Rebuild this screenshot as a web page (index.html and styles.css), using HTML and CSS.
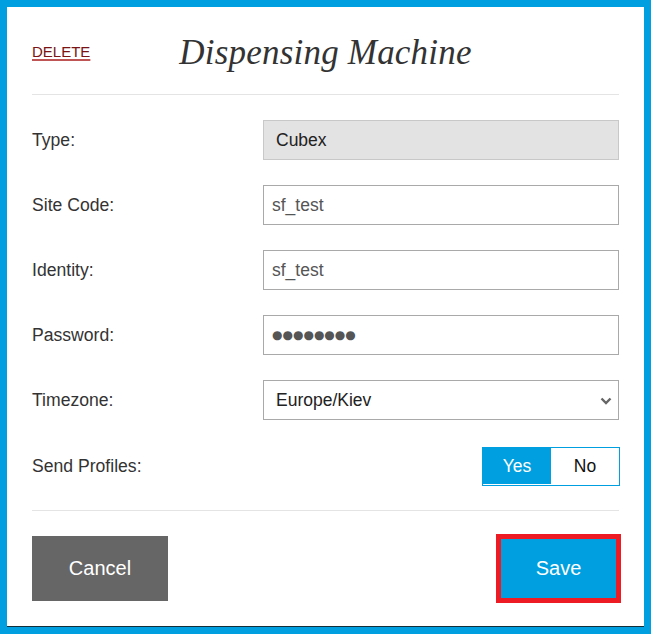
FILE: index.html
```html
<!DOCTYPE html>
<html>
<head>
<meta charset="utf-8">
<link rel="stylesheet" href="styles.css">
</head>
<body>
<div class="panel">
  <div class="header">
    <a class="delete" href="#">DELETE</a>
    <h1 class="title">Dispensing Machine</h1>
    <span></span>
  </div>
  <div class="rows">
    <div class="row">
      <label class="label">Type:</label>
      <div class="field readonly">Cubex</div>
    </div>
    <div class="row">
      <label class="label">Site Code:</label>
      <input class="field input" type="text" value="sf_test">
    </div>
    <div class="row">
      <label class="label">Identity:</label>
      <input class="field input" type="text" value="sf_test">
    </div>
    <div class="row">
      <label class="label">Password:</label>
      <input class="field input pwd" type="text" value="●●●●●●●●">
    </div>
    <div class="row">
      <label class="label">Timezone:</label>
      <div class="select-wrap">
        <select class="field select">
          <option>Europe/Kiev</option>
        </select>
        <svg class="chev" width="12" height="8" viewBox="0 0 12 8"><path d="M1.5 1.5 L6 6 L10.5 1.5" fill="none" stroke="#666" stroke-width="2.4"/></svg>
      </div>
    </div>
    <div class="row">
      <label class="label">Send Profiles:</label>
      <div class="toggle-cell">
        <div class="toggle">
          <span class="opt on">Yes</span>
          <span class="opt">No</span>
        </div>
      </div>
    </div>
  </div>
  <div class="footer">
    <button class="btn cancel">Cancel</button>
    <button class="btn save">Save</button>
  </div>
</div>
</body>
</html>
```
FILE: styles.css
```css
html, body {
  margin: 0;
  padding: 0;
  background: #00a0e0;
  height: 100%;
}
body {
  padding: 7px 7px 0 7px;
  box-sizing: border-box;
  font-family: "Liberation Sans", Arial, sans-serif;
}
.panel {
  background: #fff;
  padding: 0 25px 23px 25px;
  box-shadow: 0 1px 0 #12303c;
}
.header {
  display: grid;
  grid-template-columns: 1fr auto 1fr;
  align-items: center;
  box-sizing: border-box;
  height: 88px;
  padding-top: 4px;
  border-bottom: 1px solid #e4e4e4;
}
.delete {
  font-size: 15px;
  color: #7a1414;
  text-decoration: underline;
  text-decoration-color: #c05555;
  text-underline-offset: 2px;
  text-decoration-thickness: 2px;
  justify-self: start;
  margin-top: -2px;
}
.title {
  margin: 0;
  font-family: "Liberation Serif", Georgia, serif;
  font-style: italic;
  font-weight: normal;
  font-size: 35px;
  color: #333;
  letter-spacing: 0.2px;
}
.rows {
  display: flex;
  flex-direction: column;
  gap: 25px;
  padding: 25px 0;
  border-bottom: 1px solid #e4e4e4;
}
.row {
  display: grid;
  grid-template-columns: 231px 1fr;
  align-items: center;
  height: 40px;
}
.label {
  font-size: 17.6px;
  color: #333;
  margin-top: 1px;
}
.field {
  box-sizing: border-box;
  height: 40px;
  width: 356px;
  border: 1px solid #a9a9a9;
  font-family: "Liberation Sans", Arial, sans-serif;
  font-size: 17.5px;
  margin: 0;
  background: #fff;
}
.readonly {
  background: #e3e3e3;
  border-color: #c8c8c8;
  color: #222;
  display: flex;
  align-items: center;
  padding-left: 12px;
}
.input {
  padding: 0 8px;
  color: #555;
  outline: none;
}
.pwd {
  font-family: "DejaVu Sans", sans-serif;
  font-size: 12px;
  letter-spacing: 0;
  color: #555;
}
.select-wrap {
  position: relative;
  width: 356px;
  height: 40px;
}
.select {
  appearance: none;
  -webkit-appearance: none;
  padding: 0 12px;
  color: #222;
  border-radius: 0;
}
.chev {
  position: absolute;
  right: 7px;
  top: 17px;
}
.toggle-cell {
  display: flex;
  justify-content: flex-end;
  align-self: start;
  margin-top: 2px;
  margin-right: -1px;
}
.toggle {
  display: flex;
  border: 1px solid #00a0e0;
  height: 39px;
  box-sizing: border-box;
}
.opt {
  width: 68px;
  display: flex;
  align-items: center;
  justify-content: center;
  font-size: 17.5px;
  color: #111;
  background: #fff;
}
.opt.on {
  width: 68px;
  background: #00a0e0;
  color: #fff;
  border-bottom: 1px solid #fff;
}
.footer {
  display: flex;
  justify-content: space-between;
  align-items: center;
  padding-top: 23px;
}
.btn {
  border: none;
  font-family: "Liberation Sans", Arial, sans-serif;
  font-size: 20px;
  color: #fff;
  cursor: pointer;
  margin: 0;
}
.cancel {
  width: 136px;
  height: 65px;
  background: #666;
}
.save {
  width: 125px;
  height: 69px;
  background: #00a0e0;
  border: 5px solid #ed1c24;
  margin-right: -2px;
}
```
